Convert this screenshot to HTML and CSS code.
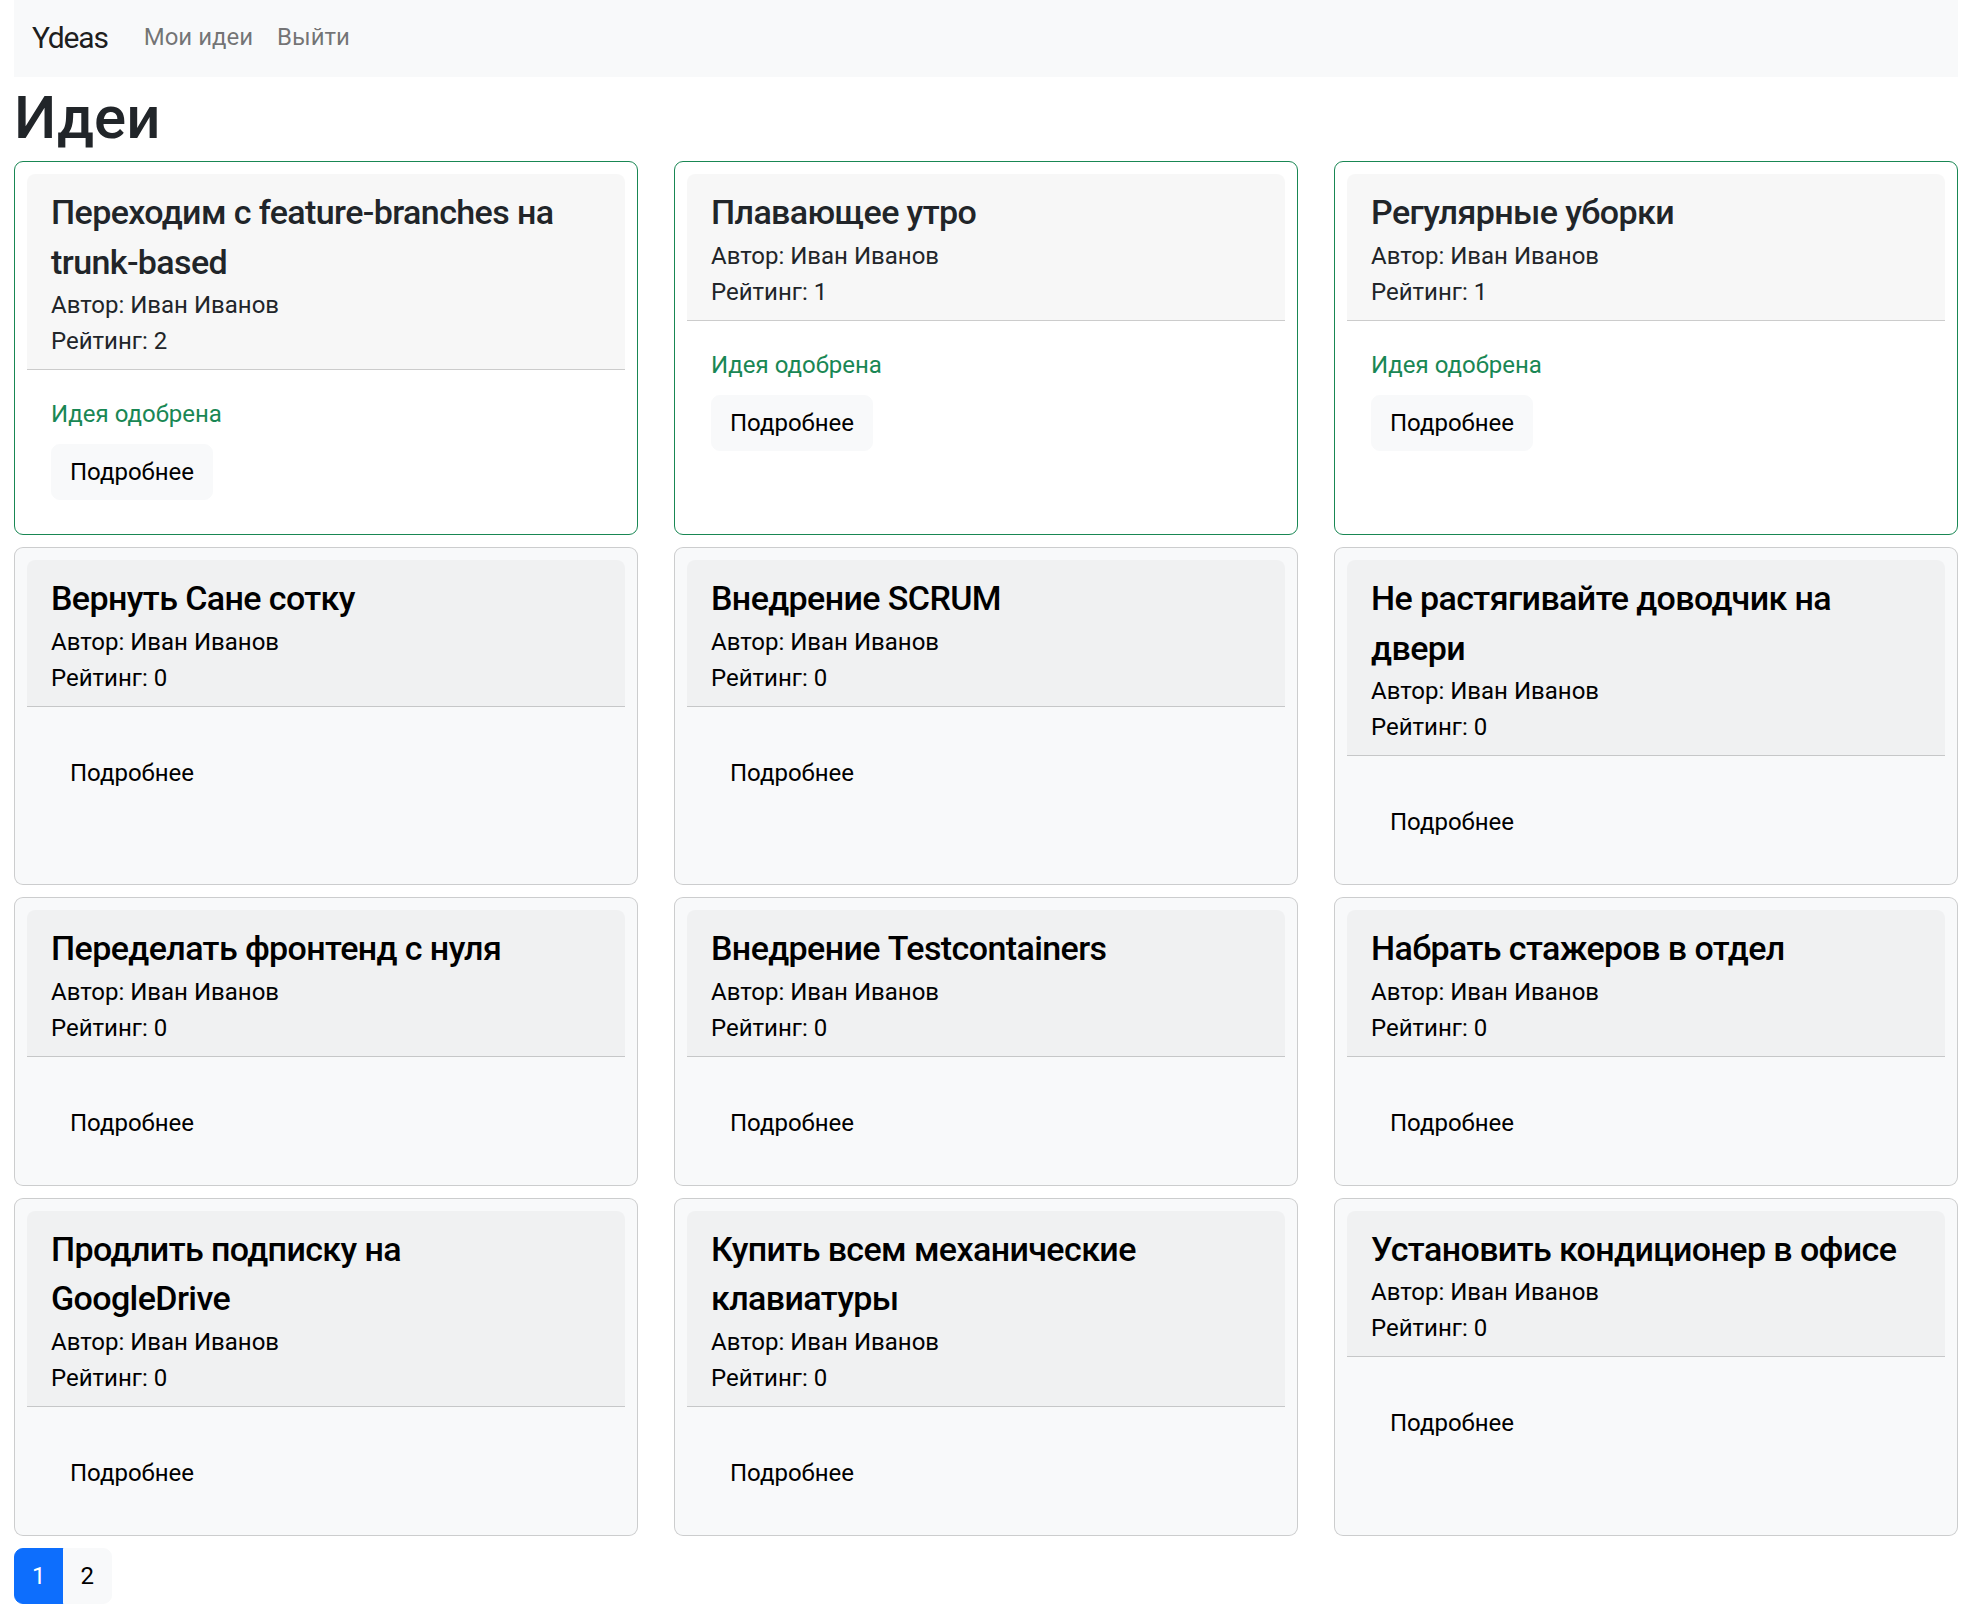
FILE: index.html
```html
<!DOCTYPE html>
<html lang="ru">
<head>
<meta charset="utf-8">
<title>Ydeas</title>
<link rel="stylesheet" href="styles.css">
</head>
<body>
<div class="page">
  <nav class="navbar">
    <a class="brand" href="#">Ydeas</a>
    <a class="nav-link" href="#">Мои идеи</a>
    <a class="nav-link" href="#">Выйти</a>
  </nav>
  <h1 class="page-title">Идеи</h1>
  <div class="grid">
    <div class="card approved">
      <div class="card-header">
        <h4 class="card-title">Переходим с feature-branches на trunk-based</h4>
        <p class="card-text">Автор: Иван Иванов</p>
        <p class="card-text">Рейтинг: 2</p>
      </div>
      <div class="card-body">
        <p class="status">Идея одобрена</p>
        <a class="btn" href="#">Подробнее</a>
      </div>
    </div>
    <div class="card approved">
      <div class="card-header">
        <h4 class="card-title">Плавающее утро</h4>
        <p class="card-text">Автор: Иван Иванов</p>
        <p class="card-text">Рейтинг: 1</p>
      </div>
      <div class="card-body">
        <p class="status">Идея одобрена</p>
        <a class="btn" href="#">Подробнее</a>
      </div>
    </div>
    <div class="card approved">
      <div class="card-header">
        <h4 class="card-title">Регулярные уборки</h4>
        <p class="card-text">Автор: Иван Иванов</p>
        <p class="card-text">Рейтинг: 1</p>
      </div>
      <div class="card-body">
        <p class="status">Идея одобрена</p>
        <a class="btn" href="#">Подробнее</a>
      </div>
    </div>

    <div class="card">
      <div class="card-header">
        <h4 class="card-title">Вернуть Сане сотку</h4>
        <p class="card-text">Автор: Иван Иванов</p>
        <p class="card-text">Рейтинг: 0</p>
      </div>
      <div class="card-body">
        <p class="status"></p>
        <a class="btn" href="#">Подробнее</a>
      </div>
    </div>
    <div class="card">
      <div class="card-header">
        <h4 class="card-title">Внедрение SCRUM</h4>
        <p class="card-text">Автор: Иван Иванов</p>
        <p class="card-text">Рейтинг: 0</p>
      </div>
      <div class="card-body">
        <p class="status"></p>
        <a class="btn" href="#">Подробнее</a>
      </div>
    </div>
    <div class="card">
      <div class="card-header">
        <h4 class="card-title">Не растягивайте доводчик на двери</h4>
        <p class="card-text">Автор: Иван Иванов</p>
        <p class="card-text">Рейтинг: 0</p>
      </div>
      <div class="card-body">
        <p class="status"></p>
        <a class="btn" href="#">Подробнее</a>
      </div>
    </div>

    <div class="card">
      <div class="card-header">
        <h4 class="card-title">Переделать фронтенд с нуля</h4>
        <p class="card-text">Автор: Иван Иванов</p>
        <p class="card-text">Рейтинг: 0</p>
      </div>
      <div class="card-body">
        <p class="status"></p>
        <a class="btn" href="#">Подробнее</a>
      </div>
    </div>
    <div class="card">
      <div class="card-header">
        <h4 class="card-title">Внедрение Testcontainers</h4>
        <p class="card-text">Автор: Иван Иванов</p>
        <p class="card-text">Рейтинг: 0</p>
      </div>
      <div class="card-body">
        <p class="status"></p>
        <a class="btn" href="#">Подробнее</a>
      </div>
    </div>
    <div class="card">
      <div class="card-header">
        <h4 class="card-title">Набрать стажеров в отдел</h4>
        <p class="card-text">Автор: Иван Иванов</p>
        <p class="card-text">Рейтинг: 0</p>
      </div>
      <div class="card-body">
        <p class="status"></p>
        <a class="btn" href="#">Подробнее</a>
      </div>
    </div>

    <div class="card">
      <div class="card-header">
        <h4 class="card-title">Продлить подписку на GoogleDrive</h4>
        <p class="card-text">Автор: Иван Иванов</p>
        <p class="card-text">Рейтинг: 0</p>
      </div>
      <div class="card-body">
        <p class="status"></p>
        <a class="btn" href="#">Подробнее</a>
      </div>
    </div>
    <div class="card">
      <div class="card-header">
        <h4 class="card-title">Купить всем механические клавиатуры</h4>
        <p class="card-text">Автор: Иван Иванов</p>
        <p class="card-text">Рейтинг: 0</p>
      </div>
      <div class="card-body">
        <p class="status"></p>
        <a class="btn" href="#">Подробнее</a>
      </div>
    </div>
    <div class="card">
      <div class="card-header">
        <h4 class="card-title">Установить кондиционер в офисе</h4>
        <p class="card-text">Автор: Иван Иванов</p>
        <p class="card-text">Рейтинг: 0</p>
      </div>
      <div class="card-body">
        <p class="status"></p>
        <a class="btn" href="#">Подробнее</a>
      </div>
    </div>
  </div>
  <ul class="pagination">
    <li class="page-item active"><a class="page-link" href="#">1</a></li>
    <li class="page-item"><a class="page-link" href="#">2</a></li>
  </ul>
</div>
</body>
</html>
```

FILE: styles.css
```css
* { box-sizing: border-box; }

html, body {
  margin: 0;
  padding: 0;
  background: #fff;
}

body {
  font-family: Roboto, "Noto Sans", "Liberation Sans", sans-serif;
  font-size: 24px;
  line-height: 36px;
  color: #212529;
}

a { text-decoration: none; }

.page {
  padding: 0 14px;
}

/* navbar */
.navbar {
  display: flex;
  align-items: center;
  height: 77px;
  padding: 7px 18px 10px;
  background: #f8f9fa;
}

.brand {
  font-size: 30px;
  line-height: 45px;
  letter-spacing: -1.2px;
  padding: 7.5px 0;
  margin-right: 24px;
  color: rgba(0, 0, 0, 0.9);
}

.nav-link {
  padding: 12px 12px;
  line-height: 36px;
  color: rgba(0, 0, 0, 0.55);
}

/* heading */
.page-title {
  margin: 0 0 7px;
  padding-top: 5px;
  font-size: 60px;
  line-height: 72px;
  font-weight: 500;
  color: #212529;
}

/* cards */
.grid {
  display: grid;
  grid-template-columns: repeat(3, 1fr);
  column-gap: 36px;
  row-gap: 12px;
}

.card {
  display: flex;
  flex-direction: column;
  padding: 12px;
  border: 1px solid rgba(0, 0, 0, 0.175);
  border-radius: 9px;
  background: #f8f9fa;
  color: #000;
}

.card.approved {
  border-color: #198754;
  background: #fff;
  color: #212529;
}

.card-header {
  padding: 14px 24px 10px;
  background: rgba(0, 0, 0, 0.03);
  border-bottom: 1px solid rgba(0, 0, 0, 0.175);
  border-radius: 8px 8px 0 0;
}

.card-title {
  margin: 0;
  padding-right: 21px;
  font-size: 34px;
  line-height: 49.5px;
  letter-spacing: -0.6px;
  font-weight: 500;
}

.card-text {
  margin: 0;
}

.card-body {
  padding: 26px 24px 22px;
}

.status {
  margin: 0 0 12px;
  color: #198754;
}

.btn {
  display: inline-block;
  padding: 9px 18px;
  border: 1px solid #f8f9fa;
  border-radius: 9px;
  background: #f8f9fa;
  color: #000;
  font-size: 24px;
  line-height: 36px;
}

/* pagination */
.pagination {
  display: flex;
  list-style: none;
  margin: 12px 0 0;
  padding: 0;
}

.page-item + .page-item {
  margin-left: -1px;
}

.page-link {
  display: block;
  padding: 9px 17px;
  line-height: 36px;
  border: 1px solid #f8f9fa;
  background: #f8f9fa;
  color: #000;
}

.page-item:first-child .page-link {
  border-radius: 9px 0 0 9px;
}

.page-item:last-child .page-link {
  border-radius: 0 9px 9px 0;
}

.page-item.active .page-link {
  background: #0d6efd;
  border-color: #0d6efd;
  color: #fff;
}
```
